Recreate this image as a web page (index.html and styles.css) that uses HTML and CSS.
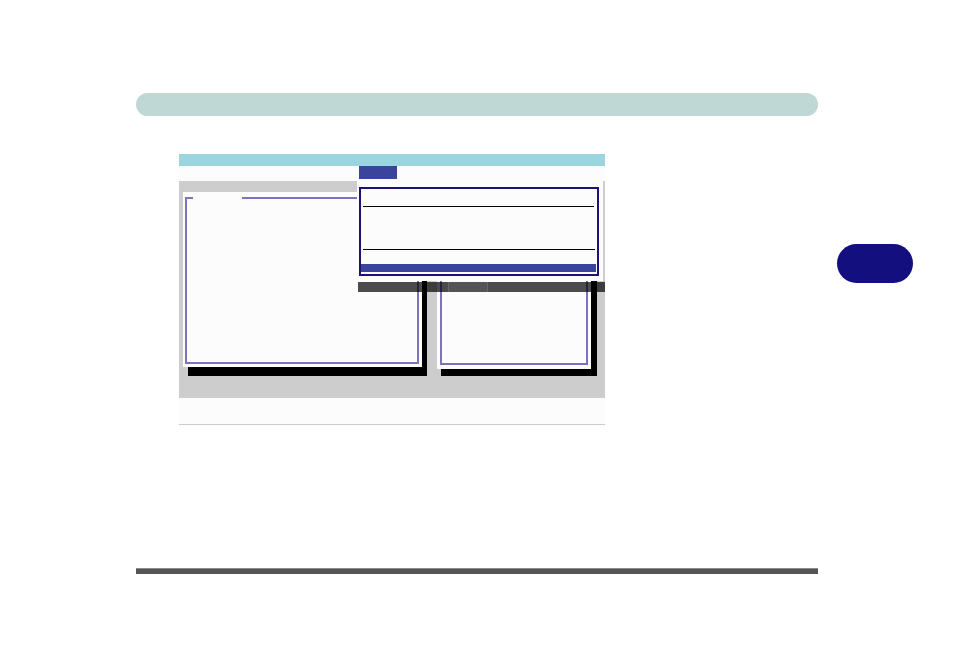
FILE: index.html
```html
<!DOCTYPE html>
<html>
<head>
<meta charset="utf-8">
<link rel="stylesheet" href="styles.css">
</head>
<body>
<div class="page">
  <div class="header-bar"></div>
  <div class="row">
    <div class="screen">
      <div class="title-bar"></div>
      <div class="menu-strip"></div>
      <div class="work-area">
        <div class="panel panel-left">
          <div class="frame">
            <span class="frame-label"></span>
          </div>
        </div>
        <div class="panel panel-right">
          <div class="frame"></div>
        </div>
      </div>
      <div class="status-strip"></div>
      <div class="popup">
        <div class="popup-tab"></div>
        <div class="popup-box">
          <div class="popup-rule"></div>
          <div class="popup-rule rule-2"></div>
          <div class="popup-select"></div>
        </div>
      </div>
      <div class="dark-bar">
        <div class="dark-seg"></div>
      </div>
    </div>
    <div class="side-tab"></div>
  </div>
  <div class="footer-rule"></div>
</div>
</body>
</html>
```
FILE: styles.css
```css
html, body {
  margin: 0;
  padding: 0;
  background: #ffffff;
  font-family: "Liberation Sans", Arial, sans-serif;
}
.page {
  width: 954px;
  height: 672px;
  padding-top: 93px;
  box-sizing: border-box;
}
.header-bar {
  margin-left: 136px;
  width: 682px;
  height: 23px;
  background: #c0d8d5;
  border-radius: 12px;
}
.row {
  display: flex;
  align-items: flex-start;
  margin-top: 38px;
  margin-left: 179px;
}
.screen {
  position: relative;
  width: 426px;
}
.title-bar {
  height: 12px;
  background: #9bd6e0;
}
.menu-strip {
  height: 15px;
  background: #fcfcfc;
}
.work-area {
  height: 217px;
  background: #cdcdcd;
  display: flex;
  align-items: flex-start;
  padding: 11px 0 0 4px;
  box-sizing: border-box;
}
.panel {
  background: #fcfcfc;
  box-sizing: border-box;
}
.panel-left {
  width: 239px;
  height: 175px;
  padding: 5px 3px 3px 2px;
  box-shadow: 5px 9px 0 0 #000;
}
.panel-right {
  width: 154px;
  height: 177px;
  margin-left: 15px;
  padding: 5px 3px 4px 3px;
  box-shadow: 5px 6px 0 1px #000;
}
.frame {
  position: relative;
  height: 100%;
  box-sizing: border-box;
  border: 2px solid #7d71c0;
}
.frame-label {
  position: absolute;
  left: 6px;
  top: -6px;
  width: 49px;
  height: 8px;
  background: #fcfcfc;
}
.status-strip {
  height: 26px;
  background: #fcfcfc;
  border-bottom: 1px solid #cccccc;
}
.popup {
  position: absolute;
  left: 178px;
  top: 12px;
  width: 246px;
  height: 115px;
  background: #fcfcfc;
}
.popup-tab {
  margin-left: 2px;
  width: 38px;
  height: 13px;
  background: #3a449c;
}
.popup-box {
  margin: 8px 0 0 2px;
  width: 240px;
  height: 89px;
  box-sizing: border-box;
  border: 2px solid #1c1272;
  padding: 17px 0 0 0;
  display: flex;
  flex-direction: column;
}
.popup-rule {
  margin-left: 2px;
  width: 231px;
  height: 1px;
  background: #000;
}
.rule-2 {
  margin-top: 42px;
  width: 232px;
}
.popup-select {
  margin: 14px 0 0 0;
  width: 235px;
  height: 8px;
  background: #3a449c;
}
.dark-bar {
  position: absolute;
  left: 179px;
  top: 128px;
  width: 247px;
  height: 10px;
  background: rgba(0, 0, 0, 0.7);
  display: flex;
}
.dark-seg {
  margin-left: 90px;
  width: 40px;
  height: 100%;
  box-sizing: border-box;
  border-left: 1px solid rgba(255, 255, 255, 0.12);
  border-right: 1px solid rgba(255, 255, 255, 0.12);
  background: rgba(255, 255, 255, 0.05);
}
.side-tab {
  margin-left: 232px;
  margin-top: 90px;
  width: 76px;
  height: 39px;
  border-radius: 20px;
  background: #130f7f;
}
.footer-rule {
  margin-left: 136px;
  margin-top: 143px;
  width: 682px;
  height: 6px;
  background: #555555;
  border-top: 1px solid #8a8a8a;
  box-sizing: border-box;
}
```
